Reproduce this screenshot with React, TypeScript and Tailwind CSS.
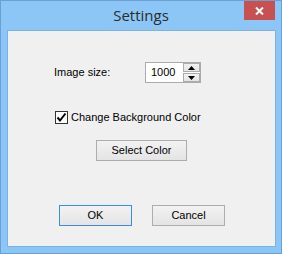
import React from "react";

const ui = { fontFamily: '"Liberation Sans", Arial, sans-serif' };

function Btn({ label, w, focused }: { label: string; w: string; focused?: boolean }) {
  return (
    <div
      className={`${w} h-[21px] flex items-center justify-center border text-[11px] text-black bg-gradient-to-b from-[#f2f2f2] to-[#e4e4e4] ${
        focused ? "border-[#3c8ce0]" : "border-[#adadad]"
      }`}
      style={ui}
    >
      {label}
    </div>
  );
}

export default function App() {
  return (
    <div className="w-[282px] h-[254px] bg-[#8cc6f6] border border-[#6c9fd3] flex flex-col">
      <div className="h-[29px] relative flex justify-center">
        <span
          className="text-[15px] text-[#2b2b2b] leading-none mt-[7px]"
          style={{ fontFamily: '"Open Sans", "Noto Sans", sans-serif' }}
        >
          Settings
        </span>
        <div className="absolute right-[6px] top-0 w-[31px] h-[19px] bg-[#c75050] flex items-center justify-center">
          <svg width="9" height="8" viewBox="0 0 9 8">
            <path d="M1 0.5 L8 7.5 M8 0.5 L1 7.5" stroke="white" strokeWidth="2" />
          </svg>
        </div>
      </div>
      <div className="flex-1 ml-[6px] mr-[5px] mb-[6px] border border-[#7eb0e2] bg-[#f0f0f0] flex flex-col">
        <div className="mt-[31px] pl-[46px] flex items-center">
          <span className="w-[91px] text-[11px] text-black" style={ui}>
            Image size:
          </span>
          <div className="w-[56px] h-[21px] border border-[#ababab] bg-white flex">
            <span className="flex-1 pl-[5px] text-[11px] text-black leading-[19px]" style={ui}>
              1000
            </span>
            <div className="w-[17px] flex flex-col gap-[1px]">
              <div className="h-[9px] border border-[#acacac] bg-gradient-to-b from-[#f2f2f2] to-[#e4e4e4] flex items-center justify-center">
                <svg width="7" height="4" viewBox="0 0 7 4">
                  <path d="M0 4 L3.5 0 L7 4 Z" fill="black" />
                </svg>
              </div>
              <div className="h-[9px] border border-[#acacac] bg-gradient-to-b from-[#f2f2f2] to-[#e4e4e4] flex items-center justify-center">
                <svg width="7" height="4" viewBox="0 0 7 4">
                  <path d="M0 0 L7 0 L3.5 4 Z" fill="black" />
                </svg>
              </div>
            </div>
          </div>
        </div>
        <div className="mt-[26px] pl-[47px] flex items-center gap-[3px]">
          <div className="w-[13px] h-[13px] border border-[#333333] bg-white flex items-center justify-center">
            <svg width="11" height="11" viewBox="0 0 11 11">
              <path d="M1.5 5.5 L4 8.5 L9.5 1.5" stroke="black" strokeWidth="2" fill="none" />
            </svg>
          </div>
          <span className="text-[11px] text-black" style={ui}>
            Change Background Color
          </span>
        </div>
        <div className="mt-[14px] pl-[88px] flex">
          <Btn label="Select Color" w="w-[91px]" />
        </div>
        <div className="mt-[44px] pl-[51px] flex gap-[20px]">
          <Btn label="OK" w="w-[73px]" focused />
          <Btn label="Cancel" w="w-[73px]" />
        </div>
      </div>
    </div>
  );
}
